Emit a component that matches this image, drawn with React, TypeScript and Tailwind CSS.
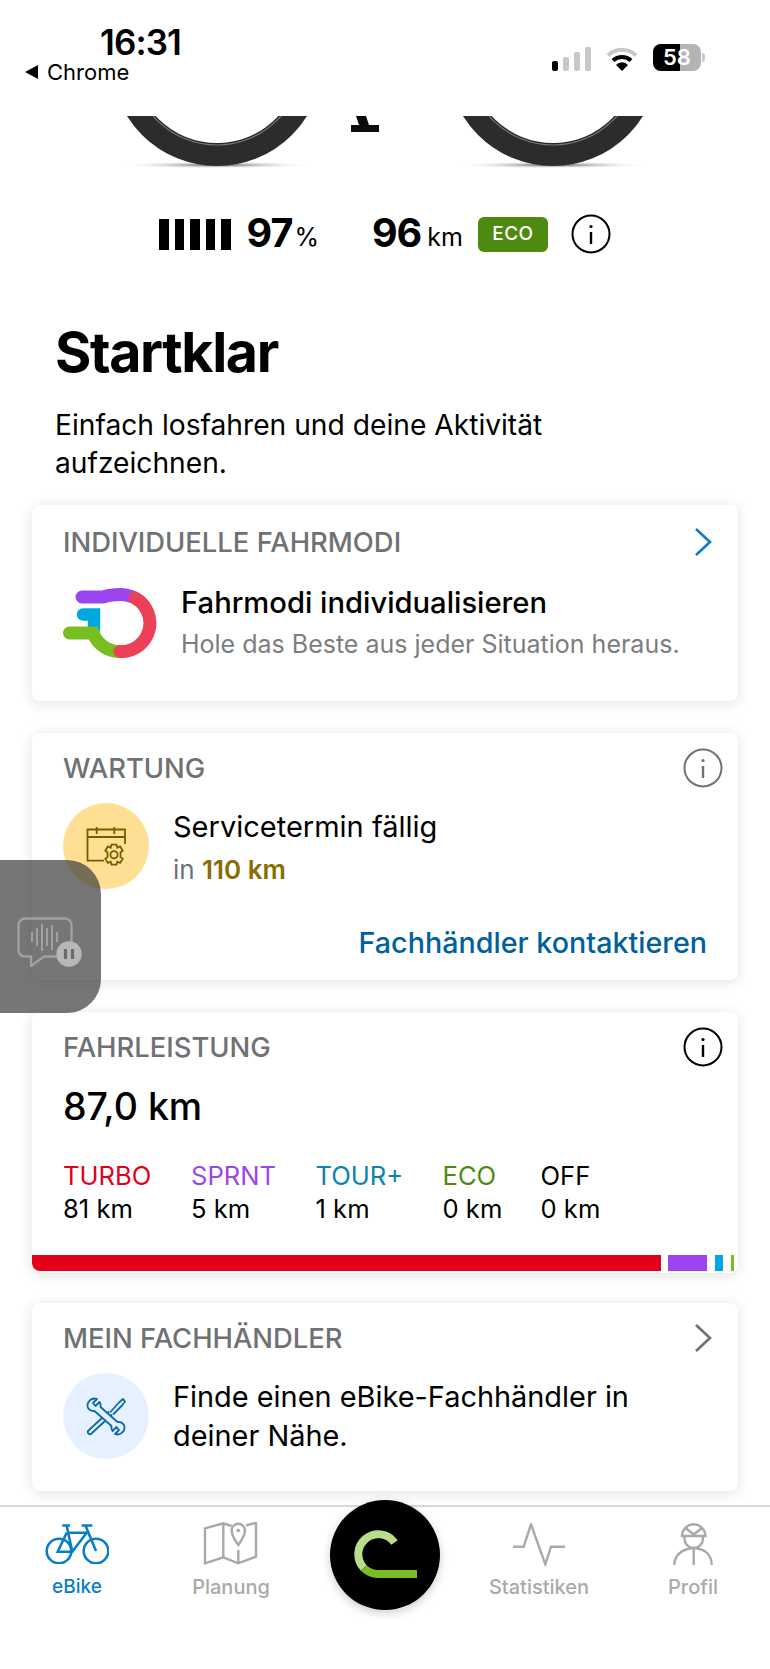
const font = { fontFamily: 'Inter, "Liberation Sans", sans-serif' }

function InfoIcon({ className }: { className: string }) {
  return (
    <svg viewBox="0 0 40 40" className={className} fill="none" stroke="currentColor">
      <circle cx="20" cy="20" r="18.5" strokeWidth="2" />
      <circle cx="20" cy="12.5" r="1.6" fill="currentColor" stroke="none" />
      <path d="M20 18v12" strokeWidth="2.4" />
    </svg>
  )
}

function Chevron({ className }: { className: string }) {
  return (
    <svg viewBox="0 0 18 30" className={className} fill="none" stroke="currentColor" strokeWidth="2.6">
      <path d="M2 2l14 13L2 28" />
    </svg>
  )
}

function Wheels() {
  return (
    <svg width="770" height="60" viewBox="0 116 770 60" className="block">
      <defs>
        <radialGradient id="sh">
          <stop offset="0" stopColor="#555" />
          <stop offset="1" stopColor="#fff" stopOpacity="0" />
        </radialGradient>
      </defs>
      {[217, 553].map((x) => (
        <g key={x}>
          <ellipse cx={x} cy="165" rx="98" ry="3.5" fill="url(#sh)" />
          <circle cx={x} cy="60" r="94.5" fill="none" stroke="#2a2c2d" strokeWidth="23" />
          <circle cx={x} cy="60" r="85" fill="none" stroke="#77797a" strokeWidth="1.2" />
        </g>
      ))}
      <path d="M356 116h10l3 9h10v7h-28v-7h8z" fill="#0c0c0c" />
    </svg>
  )
}

function ModesLogo() {
  return (
    <svg width="94" height="72" viewBox="0 0 94 72" fill="none" strokeLinecap="round" className="shrink-0">
      <path d="M20 27.500h11V42" stroke="#00a8e0" strokeWidth="12.500" />
      <path d="M6.500 46H30A28.500 28.500 0 0 0 58 64.500" stroke="#78be20" strokeWidth="13" />
      <path d="M19 10H40C46 8 52 7.500 58 7.500 62 7.500 66 8.500 70 10" stroke="#9b45ee" strokeWidth="13" />
      <path d="M72 11A28.500 28.500 0 0 1 57 64.500" stroke="#ec4058" strokeWidth="13" />
    </svg>
  )
}

function BikeIcon() {
  return (
    <svg width="64" height="40" viewBox="0 0 64 40" fill="none" stroke="#0a7fc6" strokeWidth="2.6">
      <circle cx="14" cy="27" r="12.300" />
      <circle cx="51" cy="27" r="12.300" />
      <path d="M21.700 8.700H41.700L27.300 27.700H12.700L21.700 8.700M21.700 2L27.300 27.700M40.700 2L51 27M17.300 1.500H25M36.700 1.500H47.300" />
    </svg>
  )
}

function MapIcon() {
  return (
    <svg width="56" height="44" viewBox="0 0 56 44" fill="none" stroke="#a9a9a9" strokeWidth="2.400">
      <path d="M28.700 4L20.300 1.300 2 6.300V41.300L20.300 35.300 35.300 41.300 53 34.700V.700L43 3.500M20.300 1.300V35.300M35.300 28V41.300" />
      <path d="M35.300 23C31 17 28.600 12.500 28.600 8.500A6.700 6.700 0 0 1 42 8.500C42 12.500 39.600 17 35.300 23Z" />
      <circle cx="35.300" cy="8.500" r="1.800" fill="#a9a9a9" stroke="none" />
    </svg>
  )
}

function PulseIcon() {
  return (
    <svg width="52" height="43" viewBox="0 0 52 43" fill="none" stroke="#a9a9a9" strokeWidth="2.400">
      <path d="M0 23.700H10.700L18 1.300 32.300 41.300 38 23.700H52" />
    </svg>
  )
}

function ProfileIcon() {
  return (
    <svg width="40" height="43" viewBox="0 0 40 43" fill="none" stroke="#a9a9a9" strokeWidth="2.400">
      <path d="M9 13A11.700 11.700 0 0 1 32.400 13ZM13 5.500L20.700 11.500 28.400 5.500" />
      <path d="M11.500 13V16A9.200 9 0 0 0 29.900 16V13M1.300 42C1.300 33 8 26 20.700 25 33.400 26 38.700 33 38.700 42M20.700 25V42" />
    </svg>
  )
}

function ServiceIcon() {
  return (
    <svg width="41" height="40" viewBox="0 0 41 40" fill="none" stroke="#7a5c00" strokeWidth="1.800">
      <path d="M18 34.700H1.500V3.500H39V18M1.500 11H39M10.700 1V8M28.300 1V8" />
      <g transform="translate(-2 0.700)">
        <circle cx="30" cy="28" r="3.600" />
        <path d="M27.500 18h5l.8 3 2.800-1.200 2.600 4-2.200 2v4.400l2.200 2-2.600 4-2.800-1.200-.8 3h-5l-.8-3-2.800 1.200-2.600-4 2.200-2v-4.400l-2.200-2 2.600-4 2.800 1.200z" />
      </g>
    </svg>
  )
}

function ToolsIcon() {
  return (
    <svg width="40" height="39" viewBox="0 0 40 39" fill="none" stroke="#0a6aa8" strokeWidth="1.800" strokeLinejoin="round">
      <path d="M23 14.500L2.500 33.500C.500 35.500 3.500 38.500 5.500 36.500L26 17.500" />
      <path d="M24 15.500L33 5.500 37 2 39 4.500 36 8.500 27 17.500" />
      <path
        d="M11 2L7 6L9.500 9L13.500 5A7 7 0 0 1 14.500 10L31.500 25A7 7 0 0 1 38 28A7 7 0 0 1 29 37L33 33L30.500 30L26.500 34A7 7 0 0 1 25.500 29L8.500 14A7 7 0 0 1 2 11A7 7 0 0 1 11 2Z"
        fill="#e6f0ff"
      />
    </svg>
  )
}

function VoiceIcon() {
  return (
    <svg width="65" height="50" viewBox="0 0 65 50" fill="none" stroke="#a0a0a0" strokeWidth="2.400">
      <path d="M45 39.500H27L14 49V39.500H8A6.500 6.500 0 0 1 1.500 33V8A6.500 6.500 0 0 1 8 1.500H48A6.500 6.500 0 0 1 54.500 8V26" />
      <path d="M15 15v10M20 11v18M25 7v27M30 11v18M35 8v25M40 15v10" strokeWidth="2" />
      <circle cx="52" cy="37" r="12.700" fill="#b8b8b8" stroke="none" />
      <path d="M48.500 32v10M55.500 32v10" stroke="#6a6a6a" strokeWidth="3.200" />
    </svg>
  )
}

function CenterLogo() {
  return (
    <svg width="64" height="50" viewBox="0 0 64 50" fill="none" strokeWidth="8">
      <path d="M40.500 12.500A20 20 0 1 0 9.800 38" stroke="#b9dd8a" />
      <path d="M9.800 38A20 20 0 0 0 24 44H63" stroke="#78be20" />
    </svg>
  )
}

function CardHeading({ children }: { children: React.ReactNode }) {
  return <h2 className="text-[27.4px] leading-[30px] font-medium text-[#6f7173]">{children}</h2>
}

const modes = [
  { name: 'TURBO', value: '81 km', color: 'text-[#e2001a]', width: 'w-[128px]' },
  { name: 'SPRNT', value: '5 km', color: 'text-[#9b45ee]', width: 'w-[124.5px]' },
  { name: 'TOUR+', value: '1 km', color: 'text-[#0a84ab]', width: 'w-[127px]' },
  { name: 'ECO', value: '0 km', color: 'text-[#4f8a10]', width: 'w-[98px]' },
  { name: 'OFF', value: '0 km', color: 'text-black', width: 'w-[80px]' },
]

const tabs = [
  { label: 'eBike', icon: <BikeIcon />, color: 'text-[#0a7fc6] text-[19px]' },
  { label: 'Planung', icon: <MapIcon />, color: 'text-[#a9a9a9] text-[20px]' },
  { label: '', icon: null, color: '' },
  { label: 'Statistiken', icon: <PulseIcon />, color: 'text-[#a9a9a9] text-[20px]' },
  { label: 'Profil', icon: <ProfileIcon />, color: 'text-[#a9a9a9] text-[20px]' },
]

export default function App() {
  return (
    <div style={font} className="relative h-[1669px] w-[770px] overflow-hidden bg-white text-black">
      {/* Status bar */}
      <header className="flex h-[116px] justify-between pl-[25px] pr-[65px] pt-[24px]">
        <div>
          <div className="pl-[75px] text-[35px] leading-[37px] font-semibold tracking-tight">16:31</div>
          <div className="flex items-center gap-[9px] text-[22px] leading-[22px]">
            <span className="h-0 w-0 border-y-[7px] border-r-[13px] border-y-transparent border-r-black" />
            Chrome
          </div>
        </div>
        <div className="mt-[20px] flex h-[27px] items-end gap-[15px]">
          <div className="flex items-end gap-[5px]">
            <span className="h-[10px] w-[6px] rounded-[2px] bg-black" />
            <span className="h-[14px] w-[6px] rounded-[2px] bg-[#c8c8c8]" />
            <span className="h-[19px] w-[6px] rounded-[2px] bg-[#c8c8c8]" />
            <span className="h-[24px] w-[6px] rounded-[2px] bg-[#c8c8c8]" />
          </div>
          <svg width="32" height="24" viewBox="0 0 32 24" fill="none" strokeWidth="4">
            <path d="M2 8.500a20 20 0 0 1 28 0" stroke="#c8c8c8" />
            <path d="M7 13.500a13 13 0 0 1 18 0" stroke="#000" />
            <path d="M16 24l-6-6a8 8 0 0 1 12 0z" fill="#000" stroke="none" />
          </svg>
          <div className="flex items-center gap-[1px]">
            <div className="relative h-[27px] w-[48px] overflow-hidden rounded-[8px] bg-[#b4b4b4] text-[22px] leading-[27px] font-semibold text-white">
              <span className="absolute inset-y-0 left-0 w-[27px] bg-black" />
              <span className="relative pl-[10px]">58</span>
            </div>
            <span className="h-[9px] w-[3px] rounded-r-full bg-[#c8c8c8]" />
          </div>
        </div>
      </header>

      <Wheels />

      {/* Battery + range */}
      <section className="mt-[39px] flex h-[38px] items-center pl-[159px]">
        <div className="flex gap-[6px]">
          {[0, 1, 2, 3, 4].map((i) => (
            <span key={i} className="h-[31px] w-[9.500px] bg-black" />
          ))}
        </div>
        <span className="ml-[16px] text-[39.5px] font-bold leading-none tracking-tight">97</span>
        <span className="ml-[2px] mt-[6px] text-[25px] leading-none">%</span>
        <span className="ml-[53px] text-[39.5px] font-bold leading-none tracking-tight">96</span>
        <span className="ml-[6px] mt-[6px] text-[25px] leading-none">km</span>
        <span className="ml-[15px] flex h-[35px] w-[70px] items-center justify-center rounded-[6px] bg-[#4f8a10] text-[19px] font-medium tracking-wide text-white">
          ECO
        </span>
        <InfoIcon className="ml-[23px] h-[40px] w-[40px] text-black" />
      </section>

      {/* Heading */}
      <section className="pl-[55px] pt-[71px]">
        <h1 className="text-[55.5px] leading-[56px] font-bold tracking-tight">Startklar</h1>
        <p className="mt-[26px] w-[560px] text-[28.2px] leading-[38px]">
          Einfach losfahren und deine Aktivität aufzeichnen.
        </p>
      </section>

      {/* Cards */}
      <main className="mx-[32px] mt-[23px] flex flex-col">
        <article className="h-[196px] rounded-[8px] bg-white px-[31px] pt-[22px] shadow-[0_2px_14px_rgba(0,0,0,0.12)]">
          <div className="flex items-center justify-between">
            <CardHeading>INDIVIDUELLE FAHRMODI</CardHeading>
            <Chevron className="-mr-[5px] h-[30px] w-[18px] text-[#0a7fc6]" />
          </div>
          <div className="mt-[28px] flex items-center gap-[24px]">
            <ModesLogo />
            <div>
              <div className="text-[29.2px] leading-[36px] font-medium">Fahrmodi individualisieren</div>
              <div className="mt-[7px] whitespace-nowrap text-[25px] leading-[32px] text-[#7d7d7d]">
                Hole das Beste aus jeder Situation heraus.
              </div>
            </div>
          </div>
        </article>

        <article className="mt-[32px] h-[247px] rounded-[8px] bg-white px-[31px] pt-[15px] shadow-[0_2px_14px_rgba(0,0,0,0.12)]">
          <div className="flex items-center justify-between">
            <CardHeading>WARTUNG</CardHeading>
            <InfoIcon className="-mr-[16px] h-[40px] w-[40px] text-[#6f7173]" />
          </div>
          <div className="mt-[15px] flex gap-[24px]">
            <div className="flex h-[86px] w-[86px] shrink-0 items-center justify-center rounded-full bg-[#ffdf94]">
              <ServiceIcon />
            </div>
            <div className="pt-[2px]">
              <div className="text-[29px] leading-[44px]">Servicetermin fällig</div>
              <div className="text-[26px] leading-[42px] text-[#6b7280]">
                in <span className="font-semibold text-[#8a6d00]">110 km</span>
              </div>
            </div>
          </div>
          <div className="mt-[34px] text-right text-[28.7px] leading-[36px] font-medium text-[#005f9e]">
            Fachhändler kontaktieren
          </div>
        </article>

        <article className="mt-[32px] flex h-[261px] flex-col overflow-hidden rounded-[8px] bg-white shadow-[0_2px_14px_rgba(0,0,0,0.12)]">
          <div className="px-[31px] pt-[15px]">
            <div className="flex items-center justify-between">
              <CardHeading>FAHRLEISTUNG</CardHeading>
              <InfoIcon className="-mr-[16px] h-[40px] w-[40px] text-black" />
            </div>
            <div className="mt-[18px] text-[37.5px] leading-[44px] font-medium">87,0 km</div>
            <div className="mt-[30px] flex">
              {modes.map((m) => (
                <div key={m.name} className={`${m.width} leading-[33px]`}>
                  <div className={`text-[25.6px] ${m.color}`}>{m.name}</div>
                  <div className="text-[25.6px] text-black">{m.value}</div>
                </div>
              ))}
            </div>
          </div>
          <div className="mb-[2px] mt-auto flex h-[16px]">
            <span className="w-[629px] rounded-bl-[8px] bg-[#e2001a]" />
            <span className="ml-[7px] w-[39px] bg-[#9b45ee]" />
            <span className="ml-[8px] w-[8px] bg-[#00a8e0]" />
            <span className="ml-[8px] w-[3px] bg-[#78be20]" />
          </div>
        </article>

        <article className="mt-[30px] h-[188px] rounded-[8px] bg-white px-[31px] pt-[20px] shadow-[0_2px_14px_rgba(0,0,0,0.12)]">
          <div className="flex items-center justify-between">
            <CardHeading>MEIN FACHHÄNDLER</CardHeading>
            <Chevron className="-mr-[5px] h-[30px] w-[18px] text-[#6f7173]" />
          </div>
          <div className="mt-[20px] flex items-center gap-[24px]">
            <div className="flex h-[86px] w-[86px] shrink-0 items-center justify-center rounded-full bg-[#e6f0ff]">
              <ToolsIcon />
            </div>
            <p className="w-[470px] text-[28.9px] leading-[39px]">Finde einen eBike-Fachhändler in deiner Nähe.</p>
          </div>
        </article>
      </main>

      {/* Tab bar */}
      <nav className="mt-[14px] grid grid-cols-5 border-t-2 border-[#d8d8d8] pt-[15px]">
        {tabs.map((t, i) =>
          i === 2 ? (
            <div key={i} className="flex justify-center">
              <div className="-mt-[22px] flex h-[110px] w-[110px] items-center justify-center rounded-full bg-black pl-[1px] shadow-[0_3px_10px_rgba(0,0,0,0.2)]">
                <CenterLogo />
              </div>
            </div>
          ) : (
            <div key={i} className="flex flex-col items-center">
              <div className="flex h-[44px] items-center">{t.icon}</div>
              <span className={`mt-[9px] leading-[24px] font-medium ${t.color}`}>{t.label}</span>
            </div>
          ),
        )}
      </nav>

      {/* Floating voice control overlay */}
      <div className="absolute left-0 top-[860px] h-[153px] w-[101px] rounded-r-[34px] bg-[#3c3c3c]/70 pl-[17px] pt-[57px]">
        <VoiceIcon />
      </div>
    </div>
  )
}
